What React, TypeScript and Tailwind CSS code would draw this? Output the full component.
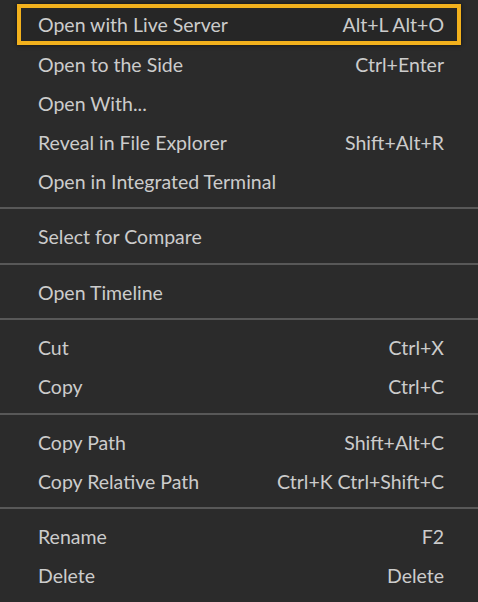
import React from "react";

type Item = { label: string; key?: string } | "sep";

const items: Item[] = [
  { label: "Open to the Side", key: "Ctrl+Enter" },
  { label: "Open With..." },
  { label: "Reveal in File Explorer", key: "Shift+Alt+R" },
  { label: "Open in Integrated Terminal" },
  "sep",
  { label: "Select for Compare" },
  "sep",
  { label: "Open Timeline" },
  "sep",
  { label: "Cut", key: "Ctrl+X" },
  { label: "Copy", key: "Ctrl+C" },
  "sep",
  { label: "Copy Path", key: "Shift+Alt+C" },
  { label: "Copy Relative Path", key: "Ctrl+K Ctrl+Shift+C" },
  "sep",
  { label: "Rename", key: "F2" },
  { label: "Delete", key: "Delete" },
];

export default function App() {
  return (
    <div
      className="w-[478px] h-[602px] overflow-hidden bg-[#2b2b2b] pt-[4px] text-[19.5px] text-[#cccccc]"
      style={{ fontFamily: "Lato, 'Open Sans', sans-serif" }}
    >
      <div className="mx-[17px] h-[41px] border-4 border-[#f2b11d] bg-[#262626] flex items-center justify-between pl-[17px] pr-[13px] shadow-[0_0_4px_rgba(0,0,0,0.6)]">
        <span>Open with Live Server</span>
        <span>Alt+L Alt+O</span>
      </div>
      {items.map((it, i) =>
        it === "sep" ? (
          <div key={i} className="pt-[6px] pb-[8.5px]">
            <div className="h-[2px] bg-[#585858]" />
          </div>
        ) : (
          <div
            key={i}
            className="h-[39px] flex items-center justify-between pl-[38px] pr-[34px]"
          >
            <span>{it.label}</span>
            {it.key && <span>{it.key}</span>}
          </div>
        )
      )}
    </div>
  );
}
